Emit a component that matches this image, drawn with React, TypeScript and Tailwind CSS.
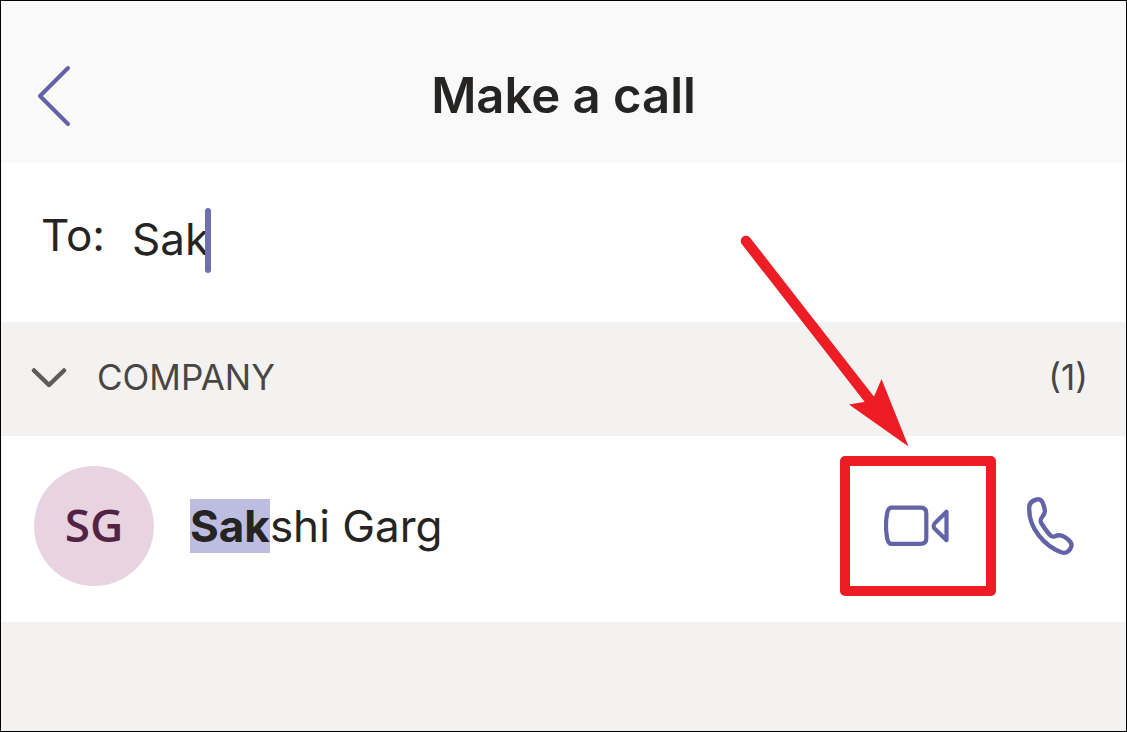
import React, { useState } from 'react';

interface Contact {
  name: string;
  initials: string;
}

const contacts: Contact[] = [{ name: 'Sakshi Garg', initials: 'SG' }];

const BackIcon = () => (
  <svg className="w-9 h-16" viewBox="0 0 36 64" fill="none" stroke="#6264a7" strokeWidth="4" strokeLinecap="round" strokeLinejoin="round">
    <path d="M32 4 L4 32 L32 60" />
  </svg>
);

const ChevronIcon = () => (
  <svg className="w-9 h-6" viewBox="0 0 36 24" fill="none" stroke="#5d5c5a" strokeWidth="4.500" strokeLinecap="round" strokeLinejoin="round">
    <path d="M3 5.500 L18 20 L33 5.500" />
  </svg>
);

const VideoIcon = () => (
  <svg className="w-[65px] h-[41px]" viewBox="0 0 65 41" fill="none" stroke="#6264a7" strokeWidth="4.200" strokeLinejoin="round">
    <path d="M7.500 2.600 H36.500 Q42.300 2.600 42.300 8 V33.500 Q42.300 38.900 36.500 38.900 H7.500 Q4.300 38.900 3.200 33.500 Q0.800 20.500 3.200 8 Q4.300 2.600 7.500 2.600 Z" />
    <path d="M62.500 6.800 V35.200 L51.500 24.500 Q47.600 21 51.500 17.500 Z" />
  </svg>
);

const PhoneIcon = () => (
  <svg className="w-[54px] h-16" viewBox="0 0 54 64" fill="none" stroke="#6264a7" strokeWidth="4.400" strokeLinejoin="round">
    <path d="M12.500 5.500 C16.500 4.200 18.500 7 19.700 11.500 C21.200 16.500 21.700 18.500 18.500 22.500 C16.300 25.200 15.800 26.700 17.700 29.700 C20 33.500 22.500 37 25.500 40.500 C27.500 42.900 28.700 43.200 31 42.300 C35 40.500 37.500 40.700 41.500 43.500 C45.500 46.500 48.500 49 47.300 52.500 C46 56.500 42.500 60 38 58.500 C20.500 52.500 4.500 34 5.200 13.500 C5.300 8.500 8 6.700 12.500 5.500 Z" />
  </svg>
);

const PointerArrow = () => (
  <svg className="absolute -left-[104px] -top-[224px] w-[176px] h-[216px] pointer-events-none" viewBox="0 0 176 216" aria-hidden="true">
    <path d="M10 9 L137 172" stroke="#ee1c25" strokeWidth="10.500" strokeLinecap="round" />
    <path d="M172.500 214.500 L145.500 147 L138.500 163.500 L131 169.500 L113 172.500 Z" fill="#ee1c25" />
  </svg>
);

// Splits the name so the part typed in the search box stands out
const HighlightedName: React.FC<{ name: string; query: string }> = ({ name, query }) => {
  const matches = query.length > 0 && name.toLowerCase().startsWith(query.toLowerCase());
  const length = matches ? query.length : 0;

  return (
    <span className="flex-1 text-[44px] leading-[54px]">
      {matches && <mark className="inline-block bg-[#bdbde2] text-[#252423] font-bold">{name.slice(0, length)}</mark>}
      {name.slice(length)}
    </span>
  );
};

const App: React.FC = () => {
  const [query, setQuery] = useState('Sak');
  const [expanded, setExpanded] = useState(true);

  return (
    <main className="min-h-screen flex flex-col border border-black bg-[#f3f2f1] text-[#252423] font-['Inter',sans-serif]">
      <header className="grid grid-cols-[1fr_auto_1fr] items-center h-[162px] pt-7 px-[35px] bg-[#f9f9f9]">
        <button type="button" aria-label="Back" className="justify-self-start">
          <BackIcon />
        </button>
        <h1 className="text-[49px] leading-[60px] font-semibold">Make a call</h1>
      </header>

      <div className="flex items-center h-[159px] px-10 pb-1 bg-white text-[44px] leading-[54px]">
        <label htmlFor="to" className="w-[91px] pb-3">To:</label>
        <input
          id="to"
          type="text"
          value={query}
          onChange={e => setQuery(e.target.value)}
          className="field-sizing-content pb-1 outline-none caret-transparent"
        />
        <span className="w-[6px] h-[65px] -ml-1 rounded-full bg-[#6f70b0]" />
      </div>

      <section>
        <button
          type="button"
          aria-expanded={expanded}
          onClick={() => setExpanded(!expanded)}
          className="flex items-center w-full h-[114px] pl-[30px] pr-[38px] pb-1 text-left text-[35px] leading-[44px] text-[#484644]"
        >
          <ChevronIcon />
          <span className="flex-1 pl-[30px]">COMPANY</span>
          <span>({contacts.length})</span>
        </button>

        {expanded && (
          <ul>
            {contacts.map(contact => (
              <li key={contact.name} className="flex items-center h-[186px] pl-[33px] pr-12 pb-[6px] bg-white">
                <span className="flex items-center justify-center size-[120px] pb-1 mr-9 rounded-full bg-[#e8d4e0] text-[#532344] text-[46px] leading-[60px] font-semibold font-['Open_Sans',sans-serif]">
                  {contact.initials}
                </span>
                <HighlightedName name={contact.name} query={query} />
                <div className="relative mr-7">
                  <button
                    type="button"
                    aria-label={`Video call ${contact.name}`}
                    className="flex items-center justify-center w-[156px] h-[140px] pr-1 pb-[2px] border-10 border-[#ee1c25] rounded-[5px]"
                  >
                    <VideoIcon />
                  </button>
                  <PointerArrow />
                </div>
                <button type="button" aria-label={`Call ${contact.name}`}>
                  <PhoneIcon />
                </button>
              </li>
            ))}
          </ul>
        )}
      </section>
    </main>
  );
};

export default App;
